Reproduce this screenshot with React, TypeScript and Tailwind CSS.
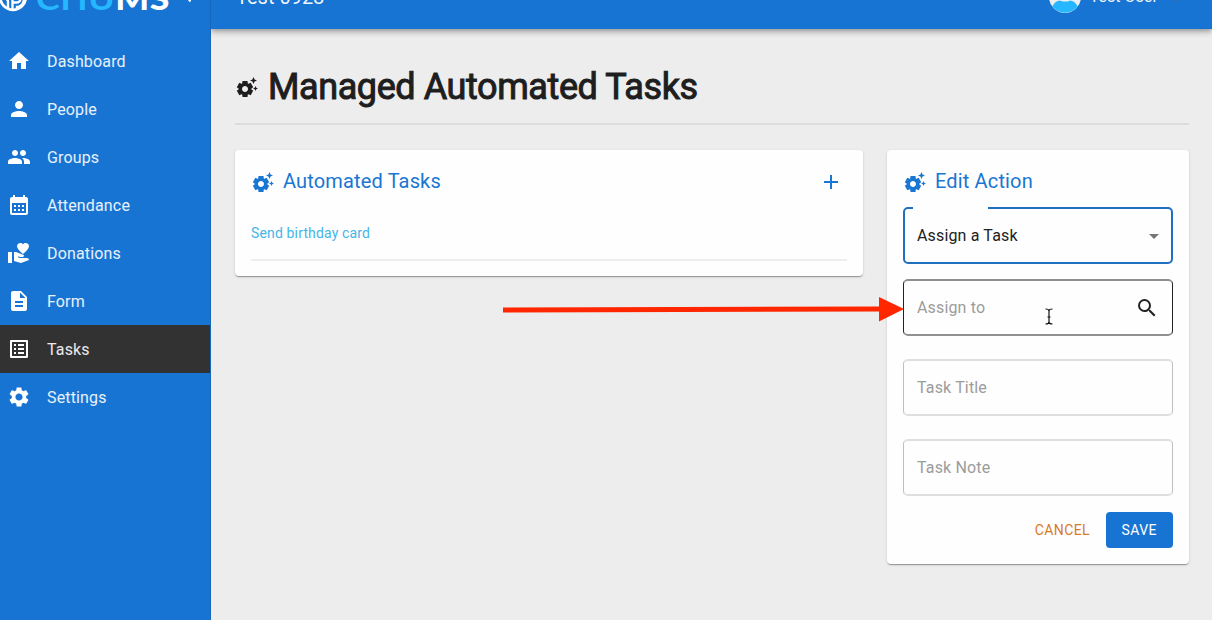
import React from "react";
import {
  MdAdd,
  MdArrowDropDown,
  MdCalendarMonth,
  MdDescription,
  MdHome,
  MdListAlt,
  MdPeople,
  MdPerson,
  MdSearch,
  MdSettings,
  MdSettingsSuggest,
  MdVolunteerActivism,
} from "react-icons/md";
import type { IconType } from "react-icons";

const navItems: { label: string; icon: IconType; active?: boolean }[] = [
  { label: "Dashboard", icon: MdHome },
  { label: "People", icon: MdPerson },
  { label: "Groups", icon: MdPeople },
  { label: "Attendance", icon: MdCalendarMonth },
  { label: "Donations", icon: MdVolunteerActivism },
  { label: "Form", icon: MdDescription },
  { label: "Tasks", icon: MdListAlt, active: true },
  { label: "Settings", icon: MdSettings },
];

function LogoMark() {
  return (
    <svg className="h-[30px] w-[30px] shrink-0" viewBox="0 0 30 30" fill="none" stroke="#fff">
      <circle cx="15" cy="15" r="12.8" strokeWidth="2.8" />
      <path d="M3 15.500c4 0 7 .5 7 4.500v6M14.500 28V12.500h4a4 4 0 0 1 0 8h-4M19 26v-1c4 0 6-3 7-7" strokeWidth="2.400" />
    </svg>
  );
}

function Sidebar() {
  return (
    <aside className="relative z-20 flex h-full w-[211px] shrink-0 flex-col border-r border-[#1768ba] bg-[#1874d2] text-white">
      <div className="flex h-[37px] items-end overflow-hidden pb-[25px]">
        <div className="-ml-0.5 flex shrink-0 items-end">
          <LogoMark />
          <span className="mb-px ml-[8px] origin-bottom-left scale-x-[1.15] text-[31px] leading-[25px] font-bold tracking-[0.5px] text-[#25b7ff] [font-family:Lato,sans-serif]">
            CHU<span className="font-black text-white">MS</span>
          </span>
          <svg className="mb-[9px] ml-[31px] h-4 w-2" viewBox="0 0 8 16" fill="none" stroke="#fff" strokeWidth="2">
            <path d="M6.500 3 1.500 8.500l5 6" />
          </svg>
        </div>
      </div>
      <nav className="flex flex-col">
        {navItems.map(({ label, icon: Icon, active }) => (
          <a
            key={label}
            className={
              active
                ? "flex h-12 items-center gap-4 bg-[#323232] pl-[7px]"
                : "flex h-12 items-center gap-4 pl-[7px]"
            }
          >
            <Icon className="h-6 w-6" />
            <span className="pt-0.5 text-base leading-6 tracking-[0.15px] text-white/90">{label}</span>
          </a>
        ))}
      </nav>
    </aside>
  );
}

function TopBar() {
  return (
    <header className="relative z-10 flex h-[29px] shrink-0 items-end justify-between overflow-visible bg-[#1874d2] pr-[33px] pl-[25px] text-white shadow-[0_2px_4px_-1px_rgba(0,0,0,0.2),0_4px_5px_0_rgba(0,0,0,0.14),0_1px_10px_0_rgba(0,0,0,0.12)]">
      <span className="pb-[20px] text-xl leading-6 text-white/95">Test 0928</span>
      <div className="flex items-end">
        <svg className="mb-4 h-8 w-8" viewBox="0 0 32 32">
          <circle cx="16" cy="16" r="16" fill="#eee" />
          <path d="M3.300 25.500C5 21.500 8 19.500 11 19.500c2 1.300 3.500 1 5 1s3 .3 5-1c3 0 6 2 7.700 6a16 16 0 0 1-25.400 0Z" fill="#25b7ff" />
        </svg>
        <span className="ml-2 pb-[20px] text-base leading-6 tracking-[0.15px] text-white/95">Test User</span>
        <span className="mb-[27px] ml-[17px] h-0.5 w-1 bg-[#286fba]" />
      </div>
    </header>
  );
}

function CardTitle({ children }: { children: React.ReactNode }) {
  return (
    <div className="flex items-center text-[#1976d2]">
      <MdSettingsSuggest className="h-6 w-6" />
      <h2 className="ml-2 pb-0.5 text-xl leading-[30px] tracking-[0.15px]">{children}</h2>
    </div>
  );
}

function Card({ className, children }: { className: string; children: React.ReactNode }) {
  return (
    <section
      className={
        "rounded bg-[#fefefe] px-4 shadow-[0_2px_1px_-1px_rgba(0,0,0,0.2),0_1px_1px_0_rgba(0,0,0,0.14),0_1px_3px_0_rgba(0,0,0,0.12)] " +
        className
      }
    >
      {children}
    </section>
  );
}

function EditAction() {
  return (
    <Card className="h-[414px] w-[302px] pt-4">
      <CardTitle>Edit Action</CardTitle>
      <div className="relative mt-[9px] flex h-[57px] items-center justify-between rounded-[5px] border-2 border-[#1f70c1] pr-[5px] pl-3">
        <span className="absolute -top-0.5 left-2 h-0.5 w-[75px] bg-[#fefefe]" />
        <span className="text-base tracking-[0.15px] text-[#222]">Assign a Task</span>
        <MdArrowDropDown className="h-6 w-6 text-[#757575]" />
      </div>
      <div className="mt-[15px] flex h-[57px] items-center justify-between rounded-[5px] border-x border-y-2 border-x-[#222] border-y-[#909090] pr-[13px] pl-[13px]">
        <span className="text-base tracking-[0.15px] text-[#9c9c9c]">Assign to</span>
        <MdSearch className="h-6 w-6 text-[#222]" />
      </div>
      <div className="mt-[23px] flex h-[57px] items-center rounded-[5px] border-x border-y-2 border-x-[#bfbfbf] border-y-[#dfdfdf] pl-[13px]">
        <span className="text-base tracking-[0.15px] text-[#9c9c9c]">Task Title</span>
      </div>
      <div className="mt-[23px] flex h-[57px] items-center rounded-[5px] border-x border-y-2 border-x-[#bfbfbf] border-y-[#dfdfdf] pl-[13px]">
        <span className="text-base tracking-[0.15px] text-[#9c9c9c]">Task Note</span>
      </div>
      <div className="mt-4 flex h-9 justify-end text-sm tracking-[0.4px]">
        <button className="pr-[15.500px] pl-4 text-[#d97a28]">CANCEL</button>
        <button className="w-[67.500px] rounded bg-[#1874d2] text-white">SAVE</button>
      </div>
    </Card>
  );
}

export default function App() {
  return (
    <div className="relative flex h-[620px] w-[1212px] overflow-hidden bg-[#ededed] [font-family:Roboto,sans-serif]">
      <Sidebar />
      <div className="flex min-w-0 flex-1 flex-col">
        <TopBar />
        <main className="pr-[23px] pl-6">
          <div className="flex h-[96px] items-center border-b-2 border-[#dcdcdc] pt-[22px] text-[#1e1e1e]">
            <MdSettingsSuggest className="h-6 w-6" />
            <h1 className="ml-[9px] text-[36px] leading-[42px] font-normal tracking-[-0.41px] [-webkit-text-stroke:1px_#1e1e1e]">Managed Automated Tasks</h1>
          </div>
          <div className="mt-[25px] flex items-start gap-6">
            <Card className="h-[126px] flex-1 pt-4">
              <div className="flex items-center justify-between">
                <CardTitle>Automated Tasks</CardTitle>
                <MdAdd className="mr-1 h-6 w-6 text-[#1976d2]" />
              </div>
              <div className="mt-[15px] flex h-[48px] items-center border-b-2 border-[#eee] pb-[7px] text-sm tracking-[0.15px] text-[#45b5e8]">
                Send birthday card
              </div>
            </Card>
            <EditAction />
          </div>
        </main>
      </div>
      <svg className="absolute top-[296px] left-[503px] z-20" width="402" height="28" viewBox="0 0 402 28">
        <path d="M0 11.500 376 10.500V1l25 12-25 12.500V15.500L0 16.500Z" fill="#ff2600" />
      </svg>
      <svg className="absolute top-[308px] left-[1044px] z-20" width="10" height="17" viewBox="0 0 10 17" fill="none" stroke="#111" strokeWidth="1.200">
        <path d="M1.500 1C3.500 1 5 1.500 5 3c0-1.500 1.500-2 3.500-2M5 3v11M1.500 16C3.500 16 5 15.500 5 14c0 1.500 1.500 2 3.500 2M3.500 9h3" />
      </svg>
    </div>
  );
}
